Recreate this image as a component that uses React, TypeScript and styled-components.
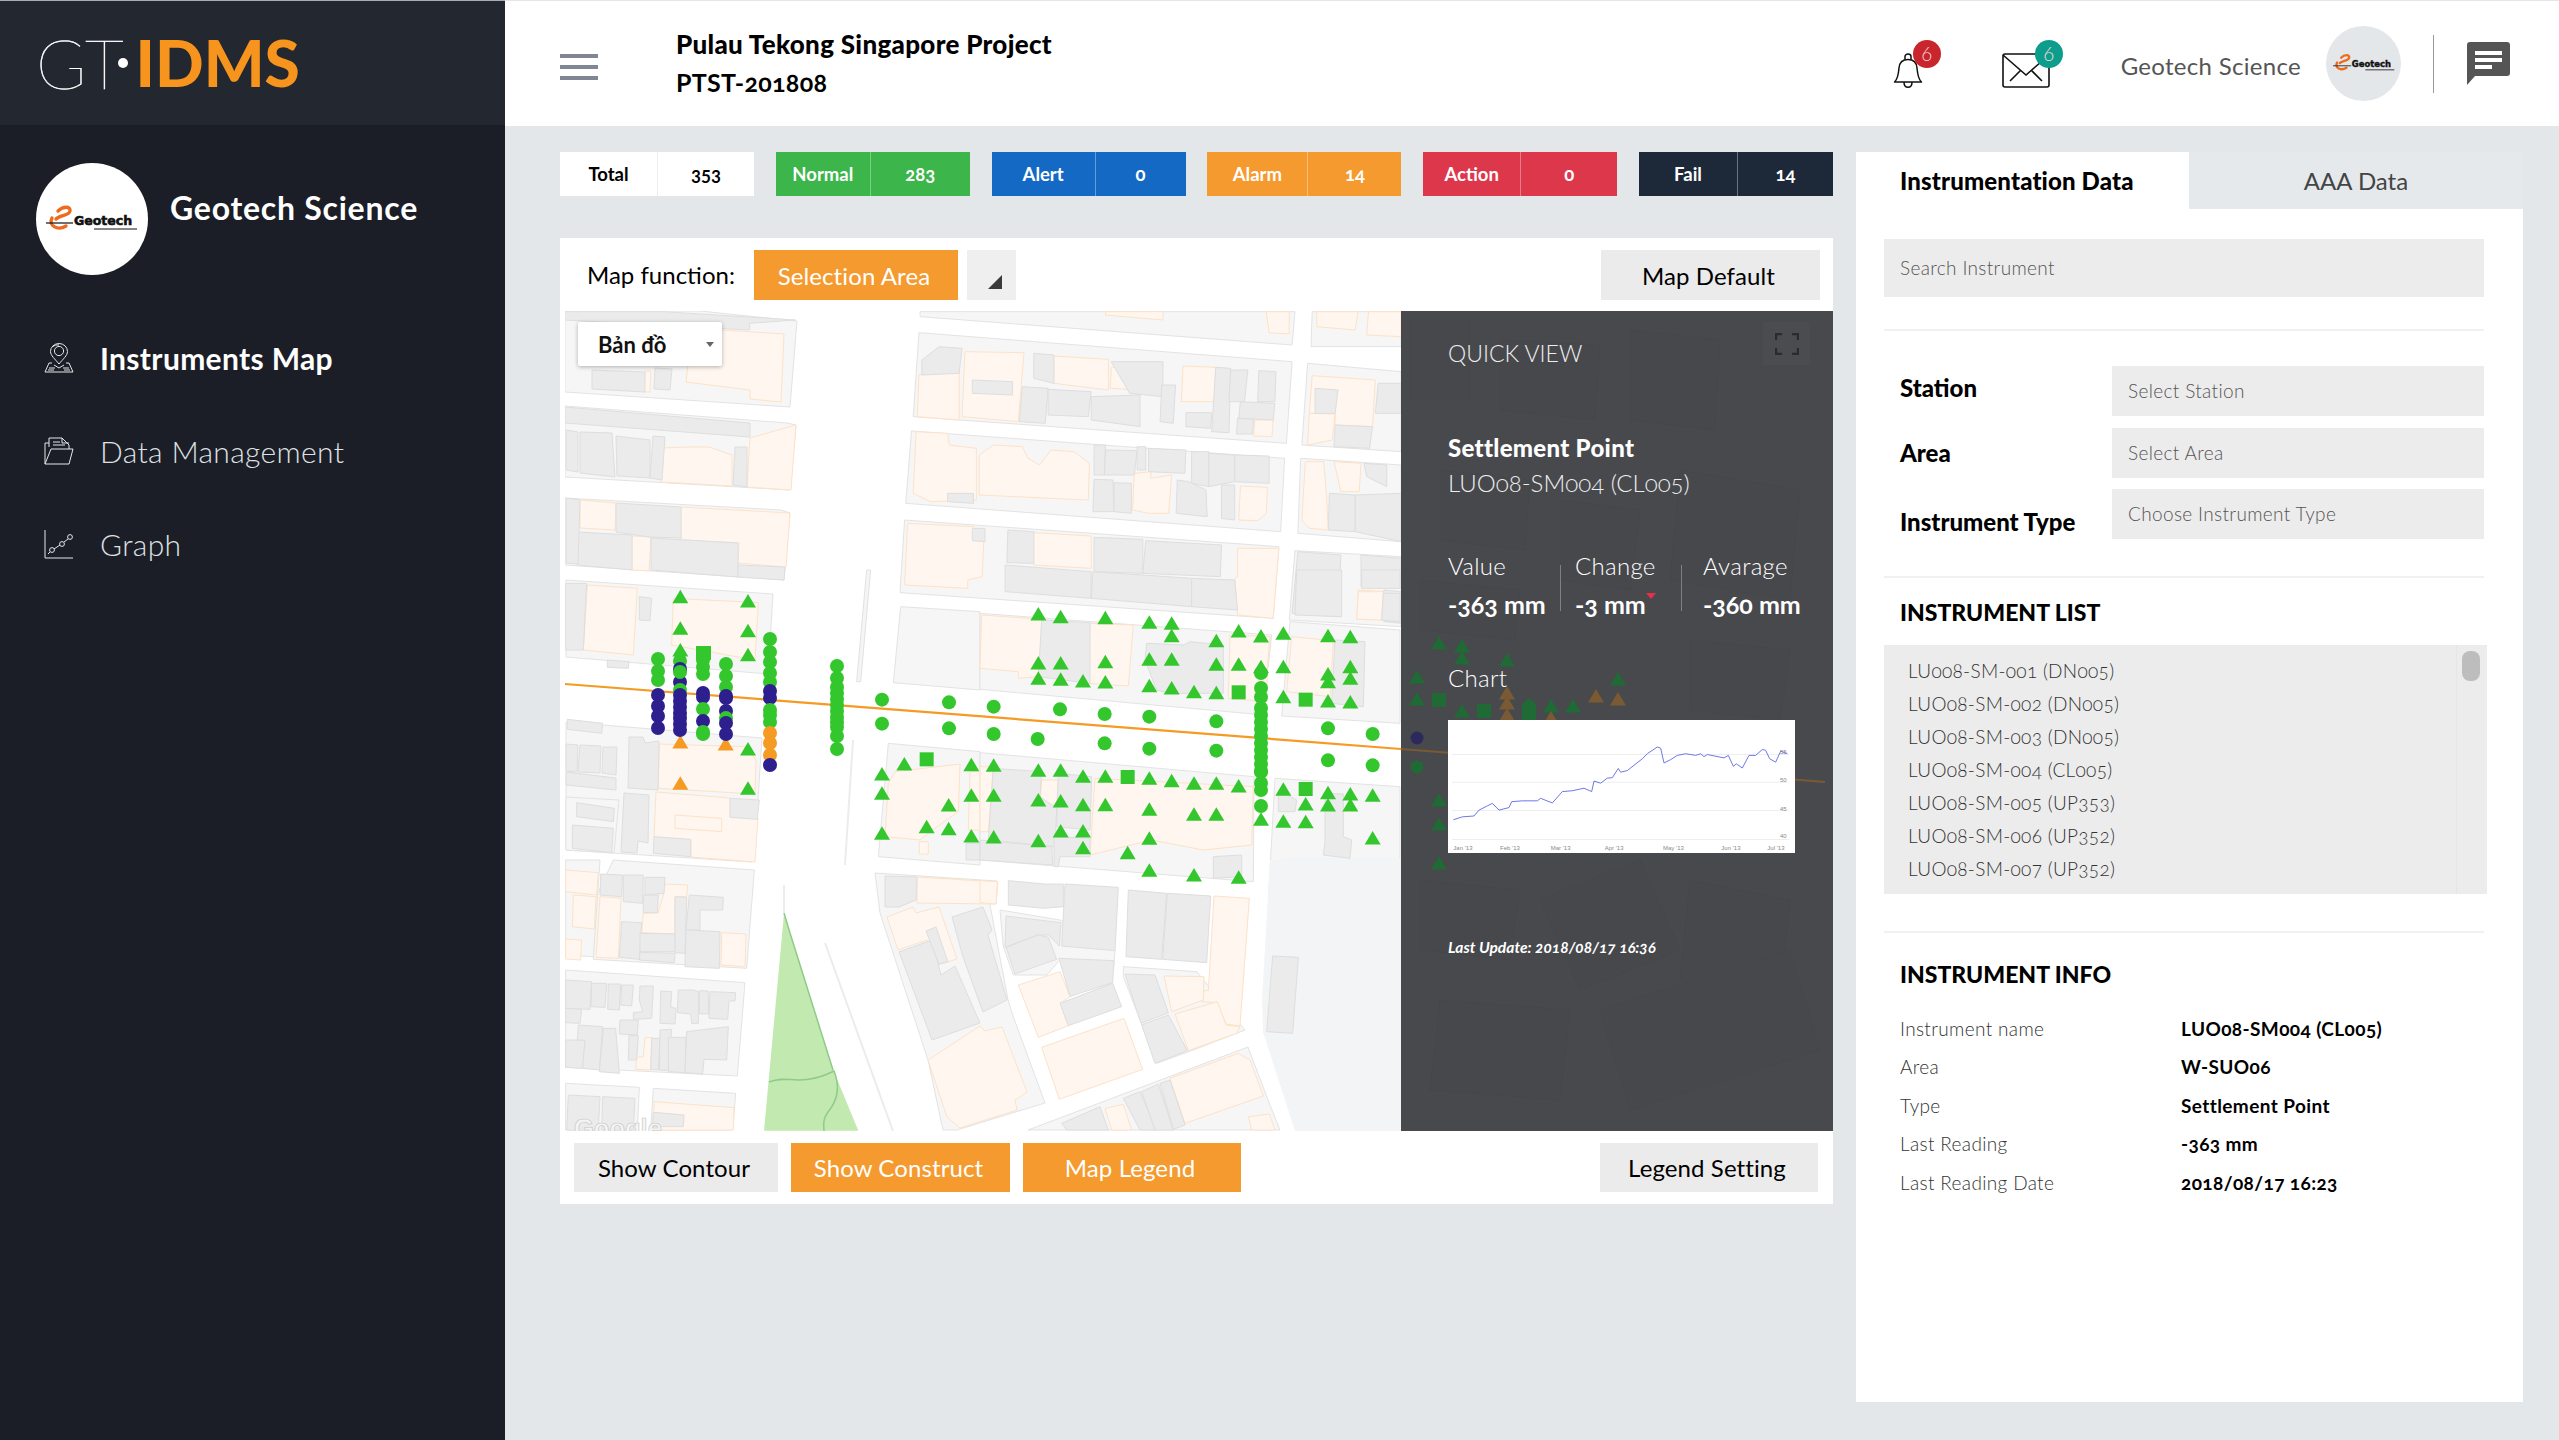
import React from 'react';
import styled, { createGlobalStyle } from 'styled-components';

const FONT = `Lato, "Noto Sans", sans-serif`;

const Global = createGlobalStyle`
  html, body { margin: 0; padding: 0; background: #e4e7ea; }
  body { font-family: ${FONT}; font-variant-numeric: oldstyle-nums; -webkit-font-smoothing: antialiased; }
  * { box-sizing: border-box; }
`;

/* ---------- map data: polygons are noted in crop coordinates and mapped to page pixels ---------- */
type Z = { ox: number; oy: number; sx: number; sy: number };
const Z2: Z = { ox: 520, oy: 130, sx: 1.742, sy: 3 };
const Z7: Z = { ox: 560, oy: 570, sx: 3, sy: 3 };
const Z8: Z = { ox: 980, oy: 570, sx: 3, sy: 3 };
const Z11: Z = { ox: 560, oy: 860, sx: 3, sy: 3 };
const Z12: Z = { ox: 980, oy: 860, sx: 3, sy: 3 };
const Z4: Z = { ox: 1400, oy: 300, sx: 3, sy: 2.376 };
const P: Z = { ox: 0, oy: 0, sx: 1, sy: 1 };

const pts = (s: string) => s.trim().split(/\s+/).map((p) => p.split(',').map(Number));
const conv = (z: Z, s: string) => pts(s).map(([x, y]) => `${z.ox + x / z.sx},${z.oy + y / z.sy}`).join(' ');

const BLOCKS: [Z, string][] = [
  [P, '565,311 700,311 797,321 790,407 565,392'],
  [P, '565,406 787,423 796,425 790,490 565,477'],
  [P, '565,498 781,510 790,513 784,580 565,565'],
  [P, '566,580 773,594 768,674 566,657'],
  [P, '566,722 762,738 758,800 752,862 566,850'],
  [P, '566,797 619,800 614,853 566,850'],
  [Z2, '697,545 1350,545 1345,645 697,560'],
  [Z2, '695,608 1345,695 1335,940 685,860'],
  [Z2, '682,903 1332,985 1325,1205 672,1120'],
  [Z2, '670,1170 1322,1250 1312,1465 662,1388'],
  [Z2, '1380,545 1535,545 1535,650 1378,650'],
  [Z2, '1372,700 1535,725 1535,965 1362,945'],
  [Z2, '1360,985 1535,1005 1535,1235 1355,1210'],
  [Z2, '1350,1262 1535,1280 1535,1490 1340,1470'],
  [Z7, '1022,110 1260,125 1260,360 1000,338'],
  [Z7, '985,520 1260,545 1260,885 955,860'],
  [Z8, '0,130 875,195 865,290 820,432 0,358'],
  [Z8, '930,155 1260,180 1260,460 905,438'],
  [Z8, '0,548 822,620 820,935 0,870'],
  [Z8, '885,625 1260,650 1260,990 865,990'],
  [Z11, '160,0 583,30 560,325 100,298 108,110'],
  [Z11, '17,0 120,0 100,290 17,285'],
  [Z11, '17,330 555,368 532,648 17,622'],
  [Z11, '17,670 238,682 232,810 17,810'],
  [Z11, '280,685 527,700 518,810 272,810'],
  [P, '875,873 997,881 990,905 1008,1000 1013,1016 1045,1103 957,1130 943,1130 928,1060 880,913'],
  [Z12, '60,150 240,180 405,272 400,330 240,300 200,345 100,345 70,260'],
  [Z12, '430,320 650,335 795,510 640,570 530,610 430,350'],
  [P, '1028,1130 1248,1047 1268,1100 1280,1130'],
];
const PALE: string[] = ['1270,860 1401,860 1401,1131 1295,1131 1263,1032 1262,1000', '1282,858 1401,858 1401,900 1282,900'];

const ORANGE: [Z, string][] = [
  [P, '721,330 784,334 781,402 750,399 750,390 686,382 690,345'],
  [P, '661,448 689,447 709,447 732,455 732,486 661,482'],
  [P, '750,438 796,425 791,490 747,487'],
  [P, '580,500 616,503 615,530 580,528'],
  [P, '681,507 790,513 786,567 738,563 739,543 681,540'],
  [P, '632,536 651,537 649,571 632,570'],
  [P, '645,371 651,371 650,392 644,392'],
  [Z7, '82,45 232,55 220,255 70,240'],
  [Z7, '340,85 595,98 585,270 335,225'],
  [Z7, '298,522 560,530 588,570 585,672 295,655'],
  [P, '656,792 730,798 730,817 758,818 755,862 691,857 691,840 654,837'],
  [Z7, '345,735 485,745 485,785 345,775'],
  [Z2, '1020,545 1120,545 1120,570 1020,555'],
  [Z2, '1300,545 1340,545 1340,612 1305,608'],
  [Z2, '695,735 765,708 765,870 692,860'],
  [Z2, '775,665 878,668 868,875 770,860'],
  [Z2, '930,678 1025,688 1025,780 930,760'],
  [Z2, '1030,712 1062,712 1060,778 1028,775'],
  [Z2, '1155,708 1212,712 1210,815 1152,815'],
  [Z2, '1280,870 1312,870 1310,920 1278,918'],
  [Z2, '690,905 745,910 748,945 795,955 795,1110 715,1115 685,1090'],
  [Z2, '800,975 825,945 875,950 885,985 905,1005 925,960 965,965 992,1000 990,1110 800,1095'],
  [Z2, '1070,1030 1100,1025 1098,1045 1135,1035 1130,1150 1095,1150 1067,1140'],
  [Z2, '1255,1068 1302,1072 1300,1150 1285,1172 1252,1170'],
  [Z2, '675,1180 790,1190 808,1230 805,1340 780,1350 780,1375 670,1365'],
  [Z2, '895,1208 995,1218 995,1315 895,1305'],
  [Z2, '1250,1255 1322,1255 1312,1465 1250,1455 1245,1345 1250,1340'],
  [Z2, '1388,545 1460,545 1455,600 1388,590'],
  [Z2, '1478,545 1535,545 1535,620 1475,615'],
  [Z2, '1380,737 1490,750 1485,890 1420,885 1420,850 1375,850'],
  [Z2, '1375,850 1420,852 1415,930 1372,945'],
  [Z2, '1368,995 1400,995 1405,1100 1408,1200 1375,1195 1362,1170'],
  [Z2, '1418,995 1465,1000 1462,1085 1430,1085'],
  [Z2, '1460,1380 1505,1385 1505,1470 1458,1465'],
  [Z7, '985,640 1005,605 1200,582 1195,725 1110,785 1080,810 975,800'],
  [Z7, '1078,815 1105,815 1105,852 1078,852'],
  [Z7, '1230,605 1260,605 1260,780 1225,780'],
  [Z8, '5,135 185,148 180,320 115,325 115,305 0,295'],
  [Z8, '330,160 460,165 445,348 325,340'],
  [Z8, '750,195 870,200 862,290 860,395 745,385'],
  [Z8, '935,200 1060,212 1050,380 920,365'],
  [Z8, '0,590 40,590 25,785 0,785'],
  [Z8, '185,630 235,630 230,710 180,700'],
  [Z8, '345,625 820,650 815,825 670,840 515,810 330,855 335,780'],
  [Z8, '1135,65 1210,65 1205,150 1130,148'],
  [Z11, '17,30 115,38 110,105 17,95'],
  [Z11, '40,105 108,110 103,207 37,200'],
  [Z11, '17,237 65,240 62,300 17,297'],
  [Z11, '120,110 183,115 175,295 108,292'],
  [Z11, '315,72 383,75 380,110 345,110 345,222 245,218 250,160 295,158 310,105'],
  [Z11, '485,218 558,222 555,320 483,315'],
  [Z11, '255,533 277,533 272,630 228,628 228,592 250,590'],
  [Z11, '283,725 522,743 520,810 280,810'],
  [P, '917,877 998,882 996,904 917,903'],
  [P, '887,917 913,907 916,913 939,907 957,959 937,965 927,940 898,950'],
  [P, '928,1060 980,1026 985,1031 1002,1027 1027,1092 1015,1100 1017,1110 960,1128 947,1117 943,1105'],
  [Z12, '702,108 808,115 780,498 738,492 712,428 668,425 672,392 685,392'],
  [Z12, '552,348 672,350 670,420 575,455'],
  [Z12, '585,462 712,425 738,495 780,500 770,520 625,572'],
  [Z12, '115,375 240,335 270,410 240,430 265,497 175,532'],
  [Z12, '185,562 432,475 488,628 238,718'],
  [Z12, '570,655 775,580 810,600 850,708 615,790'],
  [Z12, '375,745 430,733 455,810 395,810'],
  [Z12, '805,770 868,762 885,810 815,810'],
  [Z12, '0,62 52,65 48,132 0,128'],
];

const GREY: [Z, string][] = [
  [P, '592,370 645,372 645,392 592,389'],
  [P, '655,368 672,369 670,390 654,389'],
  [P, '565,407 750,423 750,437 565,423'],
  [P, '580,432 612,433 615,477 580,473'],
  [P, '616,436 650,440 650,478 617,476'],
  [P, '566,430 578,432 578,472 566,470'],
  [P, '653,436 665,437 662,480 650,478'],
  [P, '735,447 747,447 747,487 733,485'],
  [P, '616,503 681,507 681,538 649,537 616,532'],
  [P, '577,532 632,535 632,570 577,565'],
  [P, '651,538 738,543 738,577 651,570'],
  [P, '738,565 785,567 784,580 738,577'],
  [P, '566,498 580,500 578,564 566,563'],
  [Z7, '17,40 80,40 70,240 17,240'],
  [Z7, '238,80 275,85 270,152 238,150'],
  [Z7, '142,270 207,275 205,295 142,292'],
  [Z7, '22,448 128,460 125,490 22,478'],
  [P, '566,744 578,745 577,772 566,771'],
  [P, '580,745 601,746 600,773 578,772'],
  [P, '603,747 617,747 616,775 602,773'],
  [P, '566,772 616,778 616,790 566,785'],
  [P, '629,737 643,737 645,743 659,741 658,790 628,788'],
  [P, '624,793 649,795 648,843 638,841 637,853 621,852'],
  [Z7, '50,698 163,715 160,755 50,740'],
  [Z7, '37,765 160,775 155,848 37,835'],
  [Z7, '510,685 598,690 592,748 510,742'],
  [Z7, '282,800 392,808 392,860 280,850'],
  [Z7, '1218,820 1260,820 1260,870 1218,870'],
  [Z2, '700,690 730,650 770,655 765,730 700,735'],
  [Z2, '788,750 858,755 858,795 788,790'],
  [Z2, '895,670 930,675 930,760 895,745'],
  [Z2, '1030,695 1120,695 1120,800 1062,790'],
  [Z2, '875,770 920,775 915,880 870,875'],
  [Z2, '920,778 995,785 990,860 920,855'],
  [Z2, '995,800 1080,795 1080,890 995,870'],
  [Z2, '1118,765 1142,765 1138,880 1115,875'],
  [Z2, '1212,712 1238,715 1235,908 1205,905'],
  [Z2, '1238,720 1268,720 1262,815 1235,815'],
  [Z2, '1287,722 1317,725 1315,815 1285,815'],
  [Z2, '1255,815 1315,820 1312,870 1252,865'],
  [Z2, '1160,848 1205,848 1203,895 1160,890'],
  [Z2, '1250,865 1278,868 1276,912 1248,912'],
  [Z2, '745,1090 790,1090 790,1120 745,1115'],
  [Z2, '1000,945 1020,945 1018,1035 1000,1035'],
  [Z2, '1020,960 1075,962 1070,1035 1018,1035'],
  [Z2, '1075,950 1090,950 1090,1020 1075,1020'],
  [Z2, '1095,955 1160,960 1158,1030 1095,1025'],
  [Z2, '1170,965 1200,965 1200,1070 1170,1060'],
  [Z2, '1200,970 1245,975 1245,1055 1200,1070'],
  [Z2, '1245,975 1305,978 1305,1060 1245,1055'],
  [Z2, '1000,1048 1033,1050 1035,1145 998,1145'],
  [Z2, '1035,1058 1065,1060 1065,1150 1035,1145'],
  [Z2, '1145,1050 1165,1055 1195,1080 1197,1160 1143,1150'],
  [Z2, '1222,1065 1245,1065 1245,1170 1222,1165'],
  [Z2, '788,1195 810,1195 810,1235 788,1232'],
  [Z2, '850,1200 895,1205 895,1300 848,1298'],
  [Z2, '845,1305 995,1325 995,1405 845,1385'],
  [Z2, '1000,1222 1085,1228 1085,1330 1000,1325'],
  [Z2, '1090,1232 1222,1245 1220,1340 1085,1330'],
  [Z2, '998,1325 1170,1345 1170,1430 995,1405'],
  [Z2, '1170,1345 1245,1350 1250,1440 1170,1430'],
  [Z2, '1385,775 1425,780 1420,850 1385,850'],
  [Z2, '1495,760 1535,760 1535,850 1490,850'],
  [Z2, '1420,885 1485,890 1480,955 1418,950'],
  [Z2, '1470,1000 1510,1005 1510,1070 1475,1040'],
  [Z2, '1410,1090 1455,1095 1455,1205 1408,1200'],
  [Z2, '1455,1095 1535,1090 1535,1235 1455,1205'],
  [Z2, '1355,1265 1430,1275 1425,1460 1345,1450'],
  [Z2, '1465,1275 1535,1285 1535,1375 1465,1370'],
  [Z2, '1505,1380 1535,1385 1535,1480 1505,1475'],
  [Z2, '78,545 250,545 480,570 400,580 400,600 78,570'],
  [Z8, '185,150 330,158 330,340 175,320'],
  [Z8, '500,220 610,225 630,215 730,225 730,370 570,370 530,360 495,270'],
  [Z8, '1065,210 1155,215 1150,410 1055,400'],
  [Z8, '40,595 185,605 180,680 230,715 225,830 25,810'],
  [Z8, '235,610 335,620 330,780 230,770'],
  [Z8, '0,810 215,830 218,885 0,870'],
  [Z8, '700,860 785,855 785,920 700,925'],
  [Z8, '222,800 330,805 330,860 240,860 235,890 222,890'],
  [Z8, '895,660 950,690 945,725 895,725'],
  [Z8, '1035,670 1090,672 1090,800 1115,810 1110,865 1030,855 1035,815'],
  [Z8, '950,0 1085,0 1085,140 945,135'],
  [Z8, '1145,0 1260,0 1260,55 1145,55'],
  [Z8, '1210,70 1260,70 1260,155 1205,150'],
  [Z11, '122,42 187,45 185,110 120,105'],
  [Z11, '190,45 250,45 248,130 190,125'],
  [Z11, '255,52 315,52 312,100 255,105'],
  [Z11, '250,105 295,105 292,158 250,158'],
  [Z11, '185,185 245,188 238,298 178,292'],
  [Z11, '240,220 345,222 345,275 240,275'],
  [Z11, '240,277 345,280 343,308 238,300'],
  [Z11, '345,110 380,112 375,280 345,278'],
  [Z11, '388,105 490,112 488,150 420,150 420,210 378,210'],
  [Z11, '378,210 480,215 478,325 375,320'],
  [Z11, '17,360 95,365 90,448 17,445'],
  [Z11, '95,370 140,370 135,442 93,440'],
  [Z11, '145,372 182,372 178,450 143,448'],
  [Z11, '185,375 220,375 215,438 182,435'],
  [Z11, '240,378 280,378 275,475 220,478 220,458 248,455 238,420'],
  [Z11, '302,393 335,395 332,442 348,445 345,492 300,490'],
  [Z11, '355,390 400,390 415,395 415,490 395,490 392,462 352,458'],
  [Z11, '418,392 445,393 445,462 418,462'],
  [Z11, '450,395 527,398 525,423 507,423 503,478 447,475'],
  [Z11, '17,445 65,448 60,490 17,488'],
  [Z11, '17,540 75,540 68,625 17,622'],
  [Z11, '55,495 128,500 118,630 68,625 75,540 52,540'],
  [Z11, '130,505 167,505 178,640 118,635'],
  [Z11, '180,480 235,480 232,525 178,522'],
  [Z11, '207,527 235,527 230,600 205,600'],
  [Z11, '275,535 300,535 295,630 272,628'],
  [Z11, '300,510 335,508 325,632 298,630'],
  [Z11, '325,532 378,532 375,638 325,635'],
  [Z11, '380,515 505,500 500,600 432,598 428,642 375,638'],
  [Z11, '25,705 120,710 115,810 20,810'],
  [Z11, '128,710 225,715 220,810 125,810'],
  [Z11, '280,757 372,765 370,800 278,800'],
  [P, '885,876 917,877 916,900 899,907 885,907'],
  [P, '952,917 983,907 992,930 988,935 1007,1000 983,1012 963,957'],
  [P, '899,952 932,940 941,975 955,966 980,1023 932,1040'],
  [P, '926,931 936,927 948,962 939,964'],
  [Z12, '85,62 195,72 250,72 250,140 190,145 85,135'],
  [Z12, '255,72 415,82 405,272 245,258'],
  [Z12, '78,168 243,188 238,258 205,225 172,225 75,262'],
  [Z12, '78,262 175,225 205,232 230,298 105,342'],
  [Z12, '445,90 560,100 545,298 438,290'],
  [Z12, '562,100 692,108 680,308 548,298'],
  [Z12, '435,342 525,345 565,458 483,490'],
  [Z12, '485,495 565,465 622,572 525,610'],
  [Z12, '237,295 402,302 398,368 298,400 270,410'],
  [Z12, '240,430 398,370 425,440 265,497'],
  [Z12, '430,715 480,695 530,810 480,810'],
  [Z12, '485,695 535,672 580,810 525,810'],
  [Z12, '540,670 570,660 615,795 580,808'],
  [Z12, '245,790 360,740 385,810 260,810'],
  [Z12, '878,288 955,292 938,520 860,515'],
];

const UNDER: string[] = [
  '1410,320 1470,320 1470,400 1410,400', '1500,340 1600,345 1595,420 1500,410', '1630,330 1720,340 1715,430 1630,420',
  '1440,470 1530,480 1525,550 1440,540', '1560,500 1640,510 1630,590 1560,580', '1680,470 1800,490 1790,600 1670,580',
  '1420,580 1520,590 1515,640 1420,630', '1690,640 1790,650 1780,720 1690,710', '1420,880 1520,890 1510,960 1420,950',
  '1540,900 1640,860 1680,950 1580,990', '1690,880 1790,900 1780,1000 1680,980', '1440,1000 1570,1010 1560,1100 1430,1090',
  '1600,1010 1790,950 1820,1050 1630,1110',
];

const G = '#33c72d', N = '#2e1f8f', O = '#f59a23';
type C = [number, number, string];
const col = (x: number, c: string, ys: number[]): C[] => ys.map((y) => [x, y, c]);

const CIRCLES: C[] = [
  ...col(658, G, [659, 671, 680]), ...col(658, N, [695, 706, 716, 728]),
  ...col(680, G, [661]), ...col(680, N, [669, 682]), ...col(680, G, [672, 690]), ...col(680, N, [695, 701, 707, 713, 718, 724, 730]),
  ...col(703, G, [660, 667, 674]), ...col(703, N, [693, 697]), ...col(703, G, [709]), ...col(703, N, [721]), ...col(703, G, [732, 734]),
  ...col(726, G, [664, 676, 687]), ...col(726, N, [696, 698, 711]), ...col(726, G, [718]), ...col(726, N, [723, 734]),
  ...col(770, G, [639, 652, 662, 673, 682]), ...col(770, N, [691, 698]), ...col(770, G, [710, 715, 722]), ...col(770, O, [733, 743, 755]), ...col(770, N, [765]),
  ...col(837, G, [666, 678, 687, 693, 699, 705, 711, 717, 722, 727, 736, 749]),
  ...pts('966,389 966,461 1167,397 1167,475').map(([x, y]): C => [560 + x / 3, 570 + y / 3, G]),
  ...pts('41,410 240,418 374,432 508,440 709,454 41,492 173,507 374,520 508,536 709,542 1044,475 1044,571 1178,492 1178,586').map(([x, y]): C => [980 + x / 3, 570 + y / 3, G]),
  ...col(1261, G, [673, 688, 697, 708, 715, 722, 729, 736, 743, 750, 757, 764, 771, 772, 783, 790, 806]),
];

const TRI_G: [Z, string][] = [
  [Z7, '361,80 564,93 361,175 564,182 361,240 564,254 564,537 564,655 1033,582 1234,584 966,612 966,670 1234,676 1166,705 1100,770 1166,776 1234,798 966,790'],
  [Z8, '175,132 242,140 376,143 508,157 575,160 575,197 709,212 776,183 843,198 910,190 1044,197 1111,200 175,279 242,279 376,275 508,268 575,268 709,283 776,283 843,290 910,290 1044,312 1111,290 175,325 242,328 309,333 376,336 508,347 575,354 642,365 709,368 910,380 1044,335 1111,325 1044,393 1111,396 41,586 175,601 242,601 309,619 376,619 508,625 575,632 642,640 709,640 776,648 41,676 175,690 242,693 309,704 376,704 508,718 642,733 709,733 910,658 1044,668 1111,672 1178,676 977,702 1044,705 1111,705 843,748 910,754 977,755 242,783 309,783 41,801 175,812 1178,804 508,805 309,833 443,848 508,901 642,915 776,922'],
];
const TRI_O = '361,516 497,522 361,640';
const SQUARES: [Z, string][] = [[Z7, '1100,568'], [Z8, '776,367 977,389 443,621 977,657']];

const tri = (x: number, y: number) => `${x},${y - 7} ${x + 8},${y + 6.5} ${x - 8},${y + 6.5}`;
const toPage = (z: Z, s: string) => pts(s).map(([x, y]) => [z.ox + x / z.sx, z.oy + y / z.sy]);

const CHART = conv(Z4, '163,1235 190,1228 225,1226 240,1212 265,1202 280,1196 300,1212 330,1206 338,1192 370,1190 415,1190 425,1184 460,1195 490,1168 520,1166 555,1160 578,1168 585,1143 605,1148 625,1136 640,1135 658,1113 665,1122 685,1118 730,1090 745,1078 775,1062 785,1065 795,1100 815,1092 835,1082 860,1078 890,1082 905,1078 915,1085 925,1080 975,1088 988,1082 1003,1108 1012,1102 1030,1112 1050,1082 1070,1082 1090,1068 1100,1070 1112,1090 1130,1098 1145,1072 1165,1078');

/* ---------- layout ---------- */
const Page = styled.div`
  display: flex;
  width: 2559px;
  height: 1440px;
  overflow: hidden;
  background: #e4e7ea;
  color: #000;
`;
const Sidebar = styled.aside`
  width: 505px;
  flex: none;
  background: #1b1e26;
  color: #fff;
  border-top: 1px solid #a9adb3;
`;
const Brand = styled.div`
  height: 124px;
  background: #23272f;
  display: flex;
  align-items: center;
  padding-left: 36px;
  line-height: 1;
`;
const BrandThin = styled.span`
  font-size: 68px;
  font-weight: 100;
  letter-spacing: -1px;
  -webkit-text-stroke: 0.5px #fff;
`;
const BrandDot = styled.i`
  width: 10px;
  height: 10px;
  border-radius: 50%;
  background: #fff;
  margin: 0 8px 0 -5px;
`;
const BrandBold = styled.span`
  font-size: 64px;
  font-weight: 900;
  color: #f7941e;
`;
const Profile = styled.div`
  display: flex;
  align-items: flex-start;
  padding: 38px 0 0 36px;
  gap: 22px;
`;
const Avatar = styled.div<{ $size: number; $bg: string }>`
  width: ${(p) => p.$size}px;
  height: ${(p) => p.$size}px;
  flex: none;
  border-radius: 50%;
  background: ${(p) => p.$bg};
  display: flex;
  align-items: center;
  justify-content: center;
`;
const ProfileName = styled.div`
  font-size: 32px;
  line-height: 40px;
  font-weight: 700;
  padding-top: 25px;
  letter-spacing: 0.75px;
`;
const Nav = styled.nav`
  margin-top: 36px;
`;
const NavItem = styled.div<{ $active?: boolean }>`
  height: 93px;
  display: flex;
  align-items: center;
  gap: 26px;
  padding-left: 44px;
  font-size: 30px;
  letter-spacing: 0.35px;
  font-weight: ${(p) => (p.$active ? 700 : 300)};
  color: ${(p) => (p.$active ? '#fff' : '#dfe1e4')};
`;
const Main = styled.main`
  flex: 1;
  display: flex;
  flex-direction: column;
  min-width: 0;
`;
const Topbar = styled.header`
  height: 126px;
  flex: none;
  background: #fff;
  border-top: 1px solid #e4e7ea;
  display: flex;
  align-items: center;
  padding: 0 49px 0 55px;
`;
const Burger = styled.div`
  width: 38px;
  display: flex;
  flex-direction: column;
  gap: 7px;
  margin: 7px 78px 0 0;
  span { height: 4px; background: #808694; }
`;
const Titles = styled.div`
  display: flex;
  flex-direction: column;
`;
const ProjectName = styled.div`
  font-size: 26px;
  line-height: 38px;
  font-weight: 900;
  letter-spacing: 0.3px;
`;
const ProjectCode = styled.div`
  font-size: 25px;
  line-height: 39px;
  font-weight: 700;
  letter-spacing: 0.3px;
`;
const TopActions = styled.div`
  margin-left: auto;
  display: flex;
  align-items: center;
`;
const IconHolder = styled.div<{ $gap: number }>`
  position: relative;
  display: flex;
  margin-right: ${(p) => p.$gap}px;
  margin-top: 14px;
`;
const Badge = styled.span<{ $bg: string; $right: number }>`
  position: absolute;
  top: -13px;
  right: ${(p) => p.$right}px;
  width: 28px;
  height: 28px;
  border-radius: 50%;
  background: ${(p) => p.$bg};
  color: #f4d9d9;
  font-size: 19px;
  font-weight: 300;
  line-height: 28px;
  text-align: center;
  font-variant-numeric: lining-nums;
`;
const UserName = styled.div`
  font-size: 24px;
  color: #555;
  font-weight: 400;
  letter-spacing: 0.3px;
  margin-right: 25px;
  margin-top: 4px;
`;
const VLine = styled.div`
  width: 1px;
  height: 58px;
  background: #9a9a9a;
  margin: 0 33px 0 32px;
`;
const Content = styled.div`
  flex: 1;
  display: flex;
  gap: 23px;
  padding: 26px 36px 38px 55px;
  min-height: 0;
`;
const LeftCol = styled.div`
  width: 1273px;
  flex: none;
`;
const StatusRow = styled.div`
  display: flex;
  justify-content: space-between;
  margin-bottom: 42px;
`;
const Status = styled.div<{ $bg: string; $fg: string; $line: string; $label: number }>`
  width: 194px;
  height: 44px;
  display: grid;
  grid-template-columns: ${(p) => p.$label}px 1fr;
  background: ${(p) => p.$bg};
  color: ${(p) => p.$fg};
  font-size: 18.5px;
  font-weight: 700;
  line-height: 44px;
  text-align: center;
  span + span { border-left: 1px solid ${(p) => p.$line}; }
`;
const MapCard = styled.section`
  height: 966px;
  background: #fff;
  display: flex;
  flex-direction: column;
`;
const Bar = styled.div<{ $pl: number; $pr: number; $gap: number }>`
  height: 73px;
  flex: none;
  display: flex;
  align-items: flex-start;
  gap: ${(p) => p.$gap}px;
  padding: 12px ${(p) => p.$pr}px 0 ${(p) => p.$pl}px;
`;
const FnLabel = styled.div`
  font-size: 24px;
  line-height: 50px;
  width: 167px;
  font-weight: 400;
`;
const Btn = styled.button<{ $w: number; $orange?: boolean; $h?: number }>`
  width: ${(p) => p.$w}px;
  height: ${(p) => p.$h ?? 50}px;
  border: 0;
  padding: 0 4px 0 0;
  font-family: ${FONT};
  font-size: 24px;
  font-weight: 400;
  letter-spacing: 0.1px;
  background: ${(p) => (p.$orange ? '#f59a2f' : '#ebebeb')};
  color: ${(p) => (p.$orange ? '#fff' : '#000')};
`;
const CornerBtn = styled.button`
  width: 49px;
  height: 50px;
  border: 0;
  padding: 0 14px 11px 0;
  background: #efefef;
  display: flex;
  align-items: flex-end;
  justify-content: flex-end;
  margin-left: 9px;
`;
const Push = styled.div`
  flex: 1;
`;
const MapArea = styled.div`
  position: relative;
  height: 820px;
  flex: none;
  margin-left: 5px;
`;
const MapSvg = styled.svg`
  display: block;
  width: 1268px;
  height: 820px;
`;
const MapType = styled.div`
  position: absolute;
  left: 13px;
  top: 11px;
  width: 144px;
  height: 44px;
  background: #fff;
  border-radius: 2px;
  box-shadow: 0 1px 4px rgba(0, 0, 0, 0.3);
  display: flex;
  align-items: center;
  justify-content: space-between;
  padding: 0 8px 0 20px;
  font-size: 22px;
  font-weight: 700;
  color: #111;
  i {
    width: 0; height: 0;
    border: 4px solid transparent;
    border-top: 5px solid #666;
    margin-top: 5px;
  }
`;
const QuickView = styled.div`
  position: absolute;
  right: 0;
  top: 0;
  width: 432px;
  height: 820px;
  background: rgba(58, 59, 64, 0.93);
  color: #fff;
  padding: 30px 0 0 47px;
`;
const DimLayer = styled.svg`
  position: absolute;
  left: 0;
  top: 0;
  width: 432px;
  height: 820px;
`;
const QvInner = styled.div`
  position: relative;
  display: flex;
  flex-direction: column;
`;
const QvTitle = styled.div`
  font-size: 23px;
  line-height: 24px;
  font-weight: 300;
  color: #eee;
`;
const QvHead = styled.div`
  margin-top: 69px;
  font-size: 24px;
  line-height: 28px;
  font-weight: 900;
  letter-spacing: 0.3px;
`;
const QvSub = styled.div`
  margin-top: 7px;
  font-size: 24px;
  line-height: 28px;
  font-weight: 300;
  color: #eee;
`;
const Stats = styled.div`
  margin-top: 55px;
  display: flex;
  height: 67px;
`;
const Stat = styled.div<{ $w: number; $pl?: number }>`
  width: ${(p) => p.$w}px;
  padding-left: ${(p) => p.$pl ?? 0}px;
  flex: none;
`;
const StatKey = styled.div`
  font-size: 24px;
  line-height: 28px;
  font-weight: 300;
  margin-bottom: 10px;
  letter-spacing: 0.3px;
`;
const StatVal = styled.div`
  font-size: 25px;
  line-height: 28px;
  font-weight: 700;
  white-space: nowrap;
`;
const Caret = styled.i`
  display: inline-block;
  width: 0;
  height: 0;
  border: 5.5px solid transparent;
  border-top: 6px solid #e6304b;
  border-bottom: 0;
  vertical-align: 15px;
`;
const StatSep = styled.div`
  width: 1px;
  height: 46px;
  margin-top: 13px;
  background: rgba(255, 255, 255, 0.3);
  flex: none;
`;
const ChartTitle = styled(StatKey)`
  margin: 45px 0 28px;
`;
const ChartBox = styled.svg`
  display: block;
  width: 347px;
  height: 133px;
  background: #fff;
`;
const Updated = styled.div`
  margin-top: 84px;
  font-size: 15.6px;
  line-height: 20px;
  font-style: italic;
  font-weight: 700;
`;
const FullBtn = styled.div`
  position: absolute;
  top: 11px;
  right: 23px;
  width: 47px;
  height: 43px;
  background: rgba(255, 255, 255, 0.02);
  display: flex;
  align-items: center;
  justify-content: center;
`;

/* right panel */
const Panel = styled.section`
  width: 667px;
  flex: none;
  height: 1250px;
  background: #fff;
`;
const Tabs = styled.div`
  height: 57px;
  display: flex;
  background: #e6e9ec;
`;
const Tab = styled.div<{ $active?: boolean }>`
  width: ${(p) => (p.$active ? '333px' : 'auto')};
  flex: ${(p) => (p.$active ? 'none' : '1')};
  background: ${(p) => (p.$active ? '#fff' : 'transparent')};
  color: ${(p) => (p.$active ? '#000' : '#444')};
  font-size: 24px;
  font-weight: ${(p) => (p.$active ? 900 : 400)};
  line-height: 57px;
  letter-spacing: ${(p) => (p.$active ? '0.15px' : '0')};
  text-align: ${(p) => (p.$active ? 'left' : 'center')};
  padding-left: ${(p) => (p.$active ? '44px' : '0')};
`;
const PanelBody = styled.div`
  padding: 30px 39px 0 28px;
`;
const Field = styled.div<{ $h: number }>`
  height: ${(p) => p.$h}px;
  line-height: ${(p) => p.$h}px;
  background: #ececec;
  font-size: 19px;
  font-weight: 300;
  color: #555;
  letter-spacing: 0.35px;
  padding-left: 16px;
`;
const Rule = styled.div<{ $top: number }>`
  height: 2px;
  background: #f1f1f1;
  margin-top: ${(p) => p.$top}px;
`;
const Form = styled.div`
  margin-top: 35px;
  display: grid;
  grid-template-columns: 228px 1fr;
  row-gap: 11.5px;
`;
const FormLabel = styled.div<{ $lh: number; $pt?: number }>`
  height: 50px;
  font-size: 24px;
  font-weight: 900;
  line-height: ${(p) => p.$lh}px;
  padding: ${(p) => p.$pt ?? 0}px 0 0 16px;
  white-space: nowrap;
`;
const SectionTitle = styled.h3<{ $top: number; $bottom: number }>`
  margin: ${(p) => p.$top}px 0 ${(p) => p.$bottom}px;
  padding-left: 16px;
  font-size: 23px;
  line-height: 28px;
  font-weight: 900;
`;
const ListBox = styled.div`
  height: 249px;
  margin-right: -3px;
  background: #ececec;
  display: flex;
  justify-content: space-between;
`;
const Rows = styled.div`
  padding: 9px 0 0 24px;
`;
const Row = styled.div`
  height: 33px;
  line-height: 33px;
  font-size: 19px;
  font-weight: 300;
  color: #333;
  letter-spacing: 0.3px;
`;
const ScrollTrack = styled.div`
  width: 31px;
  border-left: 1px solid #e6e6e6;
  padding: 6px 7px 0 5px;
`;
const ScrollThumb = styled.div`
  height: 30px;
  border-radius: 8px;
  background: #bdbdbd;
`;
const InfoGrid = styled.div`
  display: grid;
  grid-template-columns: 281px 1fr;
  padding-left: 16px;
  margin-top: -5px;
`;
const InfoKey = styled.div`
  height: 38.4px;
  line-height: 38.4px;
  font-size: 19px;
  font-weight: 300;
  color: #333;
  letter-spacing: 0.35px;
`;
const InfoVal = styled(InfoKey)`
  font-weight: 700;
  color: #000;
  letter-spacing: 0.4px;
`;

/* ---------- drawings ---------- */
const GeotechLogo = ({ w }: { w: number }) => (
  <svg width={w} viewBox="0 0 92 30" aria-hidden>
    <path d="M12 7 C17 2 25 2 24 7 C23 12 14 11 10 15 M6 14 C2 22 12 27 20 22" fill="none" stroke="#ee6a1c" strokeWidth="3.4" strokeLinecap="round" />
    <path d="M0 19 H27" stroke="#111" strokeWidth="1.2" />
    <text x="28" y="21" fontFamily="'DejaVu Sans', sans-serif" fontWeight="700" fontSize="12.5" fill="#111" stroke="#111" strokeWidth="0.6">Geotech</text>
    <path d="M48 25 H91" stroke="#111" strokeWidth="1.2" />
  </svg>
);

const PinIcon = () => (
  <svg width="30" height="30" viewBox="0 0 30 30" fill="none" stroke="#e4e6e8" strokeWidth="1">
    <path d="M15 21 C11 16 6.5 12.5 6.5 8.5 A8.5 8 0 0 1 23.5 8.5 C23.5 12.5 19 16 15 21 Z" />
    <circle cx="15" cy="8" r="4.6" />
    <path d="M9 3.5 A6.5 6 0 0 1 15 2" />
    <path d="M8 20 H5 L1 29 H29 L25 20 H22 M10 22 L15 25 L20 22" />
    <path d="M5 25 H11 M19 25 H25 M4 27 H10 M20 27 H26" />
  </svg>
);
const FolderIcon = () => (
  <svg width="30" height="30" viewBox="0 0 30 30" fill="none" stroke="#e4e6e8" strokeWidth="1">
    <path d="M1 28 V7 H5 M1 28 H25 L29 13 H26 M1 28 L7 13 H26" />
    <path d="M5 11 V2 H18 L25 9 V13" />
    <path d="M9 6 H16 M9 9 H21" />
    <path d="M18 2 V7 H25" />
  </svg>
);
const GraphIcon = () => (
  <svg width="30" height="30" viewBox="0 0 30 30" fill="none" stroke="#e4e6e8" strokeWidth="1">
    <path d="M1 1 V29 H29" />
    <circle cx="8" cy="21" r="2.4" />
    <circle cx="18" cy="15" r="2.4" />
    <circle cx="26" cy="8" r="2.4" />
    <path d="M4 25 L6 23 M10 20 L16 16 M20 13 L24 10" />
  </svg>
);
const BellIcon = () => (
  <svg width="30" height="36" viewBox="0 0 30 36" fill="none" stroke="#111" strokeWidth="1.5" strokeLinejoin="round">
    <path d="M1.5 29 C5 26 5.5 21 6 15 C6.5 9 10 6.5 15 6.5 C20 6.5 23.5 9 24 15 C24.5 21 25 26 28.5 29 Z" />
    <path d="M12 6.5 V3.5 A3 2.5 0 0 1 18 3.5 V6.5" />
    <path d="M11 29 C11 36 19 36 19 29" />
  </svg>
);
const MailIcon = () => (
  <svg width="48" height="35" viewBox="0 0 48 35" fill="none" stroke="#111" strokeWidth="1.6">
    <rect x="1" y="1" width="46" height="33" rx="2" />
    <path d="M1 2 L24 22 L47 2 M8 28 L19 17 M40 28 L29 17" />
  </svg>
);
const ChatIcon = () => (
  <svg width="43" height="43" viewBox="0 0 43 43" aria-hidden>
    <path d="M3 0 H40 A3 3 0 0 1 43 3 V31 A3 3 0 0 1 40 34 H8 L0 43 V3 A3 3 0 0 1 3 0 Z" fill="#555" />
    <path d="M8 9 H35 V13 H8 Z M8 16 H35 V20 H8 Z M8 23 H25 V27 H8 Z" fill="#fff" />
  </svg>
);
const FullscreenIcon = () => (
  <svg width="24" height="22" viewBox="0 0 24 22" fill="none" stroke="#2a2b30" strokeWidth="2.4">
    <path d="M1 7 V1 H7 M17 1 H23 V7 M23 15 V21 H17 M7 21 H1 V15" />
  </svg>
);

const polyFill = { b: '#f6f6f6', g: '#ebebeb', o: '#fff6ef' };
const polyStroke = { b: '#e3e3e3', g: '#dedede', o: '#fde2c8' };

const BaseMap = () => (
  <>
    <rect x="565" y="311" width="1268" height="820" fill="#fff" />
    {BLOCKS.map(([z, s], i) => <polygon key={`b${i}`} points={conv(z, s)} fill={polyFill.b} stroke={polyStroke.b} />)}
    {PALE.map((s, i) => <polygon key={`p${i}`} points={s} fill="#f3f4f6" />)}
    {ORANGE.map(([z, s], i) => <polygon key={`o${i}`} points={conv(z, s)} fill={polyFill.o} stroke={polyStroke.o} />)}
    {GREY.map(([z, s], i) => <polygon key={`g${i}`} points={conv(z, s)} fill={polyFill.g} stroke={polyStroke.g} />)}
    {UNDER.map((s, i) => <polygon key={`u${i}`} points={s} fill="#f0f0f0" stroke="#cfcfcf" />)}
    <polygon points={conv(Z11, '672,160 690,220 820,630 895,812 612,812 650,400')} fill="#c2eab0" />
    <path d="M784 913 L790 933 L833 1070" fill="none" stroke="#8fcb88" strokeWidth="1.5" />
    <path d="M769 1082 C786 1074 800 1088 834 1071 C840 1086 838 1100 828 1112 C822 1120 824 1126 824 1131" fill="none" stroke="#8fcb88" strokeWidth="1.5" />
    <path d="M825 943 L893 1131 M784 885 L784 913 M853 740 L845 865" fill="none" stroke="#ececec" strokeWidth="2" />
    <polygon points={conv(Z7, '920,0 932,0 902,335 890,335')} fill="#f5f5f5" stroke="#e2e2e2" />
    <text x="574" y="1137" fontFamily="'Liberation Sans', sans-serif" fontSize="25.5" fontWeight="700" fill="#f4f4f4" stroke="#c4c4c4" strokeWidth="0.6">Google</text>
  </>
);

const Markers = () => (
  <>
    <line x1="565" y1="684" x2="1401" y2="749" stroke="#f59a23" strokeWidth="2.2" />
    {TRI_G.flatMap(([z, s], i) => toPage(z, s).map(([x, y], j) => <polygon key={`t${i}-${j}`} points={tri(x, y)} fill={G} />))}
    {toPage(Z7, TRI_O).map(([x, y], j) => <polygon key={`to${j}`} points={tri(x, y)} fill={O} />)}
    {SQUARES.flatMap(([z, s], i) => toPage(z, s).map(([x, y], j) => <rect key={`s${i}-${j}`} x={x - 7} y={y - 7} width="14" height="14" fill={G} />))}
    <rect x="696" y="646" width="15" height="14" fill={G} />
    {CIRCLES.map(([x, y, c], i) => <circle key={`c${i}`} cx={x} cy={y} r="7" fill={c} />)}
  </>
);

const DIM_G = '#1f6a35';
const DIM_O = '#7a5a33';
const DimMarkers = () => (
  <DimLayer viewBox="1401 311 432 820">
    <line x1="1401" y1="749" x2="1825" y2="782" stroke={DIM_O} strokeWidth="2" />
    {pts('1439,643 1462,646 1462,658 1507,660 1417,677 1417,699 1462,711 1551,706 1573,706 1618,679 1439,800 1439,824 1439,863').map(([x, y], i) => <polygon key={i} points={tri(x, y)} fill={DIM_G} />)}
    {pts('1507,693 1507,703 1507,715 1551,718 1596,696 1618,699').map(([x, y], i) => <polygon key={i} points={tri(x, y)} fill={DIM_O} />)}
    {pts('1439,700 1484,711').map(([x, y], i) => <rect key={i} x={x - 7} y={y - 7} width="14" height="14" fill={DIM_G} />)}
    <polygon points="1522,704 1529,698 1536,704 1536,720 1522,720" fill={DIM_G} />
    <circle cx="1417" cy="738" r="6.5" fill="#2c2a5c" />
    <circle cx="1417" cy="767" r="6.5" fill={DIM_G} />
  </DimLayer>
);

const MONTHS: [string, number][] = [["Jan '13", 163], ["Feb '13", 303], ["Mar '13", 455], ["Apr '13", 617], ["May '13", 792], ["Jun '13", 967], ["Jul '13", 1105]];
const Chart = () => (
  <ChartBox viewBox="1449 720 347 133">
    {[1080, 1146, 1213, 1282].map((y) => <line key={y} x1="1453" x2="1790" y1={300 + y / 2.376} y2={300 + y / 2.376} stroke="#eee" />)}
    {[['55', 1072], ['50', 1138], ['45', 1206], ['40', 1272]].map(([t, y]) => (
      <text key={t} x="1781" y={303 + Number(y) / 2.376} fontSize="6" fontFamily="'Liberation Sans', sans-serif" fill="#888">{t}</text>
    ))}
    {MONTHS.map(([t, x]) => (
      <text key={t} x={1400 + x / 3} y="850" fontSize="6" fontFamily="'Liberation Sans', sans-serif" fill="#888">{t}</text>
    ))}
    <polyline points={CHART} fill="none" stroke="#6f78e6" strokeWidth="1" />
  </ChartBox>
);

const STATUS = [
  { k: 'Total', v: '353', bg: '#fff', fg: '#000', line: '#eeeeee', label: 97 },
  { k: 'Normal', v: '283', bg: '#3cb54a', fg: '#fff', line: 'rgba(255,255,255,.35)', label: 94 },
  { k: 'Alert', v: '0', bg: '#1469c4', fg: '#fff', line: 'rgba(255,255,255,.35)', label: 103 },
  { k: 'Alarm', v: '14', bg: '#f59a2f', fg: '#fff', line: 'rgba(255,255,255,.35)', label: 100 },
  { k: 'Action', v: '0', bg: '#dd374c', fg: '#fff', line: 'rgba(255,255,255,.35)', label: 97 },
  { k: 'Fail', v: '14', bg: '#1d2939', fg: '#fff', line: 'rgba(255,255,255,.35)', label: 98 },
];
const LIST = ['LU008-SM-001 (DN005)', 'LUO08-SM-002 (DN005)', 'LUO08-SM-003 (DN005)', 'LUO08-SM-004 (CL005)', 'LUO08-SM-005 (UP353)', 'LUO08-SM-006 (UP352)', 'LUO08-SM-007 (UP352)'];
const INFO: [string, string][] = [['Instrument name', 'LUO08-SM004 (CL005)'], ['Area', 'W-SUO06'], ['Type', 'Settlement Point'], ['Last Reading', '-363 mm'], ['Last Reading Date', '2018/08/17 16:23']];

export default function App() {
  return (
    <Page>
      <Global />
      <Sidebar>
        <Brand>
          <BrandThin>GT</BrandThin>
          <BrandDot />
          <BrandBold>IDMS</BrandBold>
        </Brand>
        <Profile>
          <Avatar $size={112} $bg="#fff"><GeotechLogo w={92} /></Avatar>
          <ProfileName>Geotech Science</ProfileName>
        </Profile>
        <Nav>
          <NavItem $active><PinIcon />Instruments Map</NavItem>
          <NavItem><FolderIcon />Data Management</NavItem>
          <NavItem><GraphIcon />Graph</NavItem>
        </Nav>
      </Sidebar>
      <Main>
        <Topbar>
          <Burger><span /><span /><span /></Burger>
          <Titles>
            <ProjectName>Pulau Tekong Singapore Project</ProjectName>
            <ProjectCode>PTST-201808</ProjectCode>
          </Titles>
          <TopActions>
            <IconHolder $gap={79}><BellIcon /><Badge $bg="#c8252c" $right={-18}>6</Badge></IconHolder>
            <IconHolder $gap={71}><MailIcon /><Badge $bg="#0c9d8c" $right={-13}>6</Badge></IconHolder>
            <UserName>Geotech Science</UserName>
            <Avatar $size={75} $bg="#e4e7ea"><GeotechLogo w={62} /></Avatar>
            <VLine />
            <ChatIcon />
          </TopActions>
        </Topbar>
        <Content>
          <LeftCol>
            <StatusRow>
              {STATUS.map((s) => (
                <Status key={s.k} $bg={s.bg} $fg={s.fg} $line={s.line} $label={s.label}>
                  <span>{s.k}</span><span>{s.v}</span>
                </Status>
              ))}
            </StatusRow>
            <MapCard>
              <Bar $pl={27} $pr={13} $gap={0}>
                <FnLabel>Map function:</FnLabel>
                <Btn $w={204} $orange>Selection Area</Btn>
                <CornerBtn aria-label="corner">
                  <svg width="14" height="14" viewBox="0 0 14 14"><path d="M14 0 V14 H0 Z" fill="#3a3a3a" /></svg>
                </CornerBtn>
                <Push />
                <Btn $w={219}>Map Default</Btn>
              </Bar>
              <MapArea>
                <MapSvg viewBox="565 311 1268 820" preserveAspectRatio="none">
                  <BaseMap />
                  <Markers />
                </MapSvg>
                <MapType>Bản đồ<i /></MapType>
                <QuickView>
                  <DimMarkers />
                  <FullBtn><FullscreenIcon /></FullBtn>
                  <QvInner>
                    <QvTitle>QUICK VIEW</QvTitle>
                    <QvHead>Settlement Point</QvHead>
                    <QvSub>LUO08-SM004 (CL005)</QvSub>
                    <Stats>
                      <Stat $w={112}><StatKey>Value</StatKey><StatVal>-363 mm</StatVal></Stat>
                      <StatSep />
                      <Stat $w={120} $pl={14}><StatKey>Change</StatKey><StatVal>-3 mm<Caret /></StatVal></Stat>
                      <StatSep />
                      <Stat $w={150} $pl={21}><StatKey>Avarage</StatKey><StatVal>-360 mm</StatVal></Stat>
                    </Stats>
                    <ChartTitle>Chart</ChartTitle>
                    <Chart />
                    <Updated>Last Update: 2018/08/17 16:36</Updated>
                  </QvInner>
                </QuickView>
              </MapArea>
              <Bar $pl={14} $pr={15} $gap={13}>
                <Btn $w={204} $h={49}>Show Contour</Btn>
                <Btn $w={219} $h={49} $orange>Show Construct</Btn>
                <Btn $w={218} $h={49} $orange>Map Legend</Btn>
                <Push />
                <Btn $w={218} $h={49}>Legend Setting</Btn>
              </Bar>
            </MapCard>
          </LeftCol>
          <Panel>
            <Tabs>
              <Tab $active>Instrumentation Data</Tab>
              <Tab>AAA Data</Tab>
            </Tabs>
            <PanelBody>
              <Field $h={58}>Search Instrument</Field>
              <Rule $top={32} />
              <Form>
                <FormLabel $lh={44}>Station</FormLabel>
                <Field $h={50}>Select Station</Field>
                <FormLabel $lh={50}>Area</FormLabel>
                <Field $h={50}>Select Area</Field>
                <FormLabel $lh={50} $pt={8}>Instrument Type</FormLabel>
                <Field $h={50}>Choose Instrument Type</Field>
              </Form>
              <Rule $top={37} />
              <SectionTitle $top={20} $bottom={19}>INSTRUMENT LIST</SectionTitle>
              <ListBox>
                <Rows>{LIST.map((r) => <Row key={r}>{r}</Row>)}</Rows>
                <ScrollTrack><ScrollThumb /></ScrollTrack>
              </ListBox>
              <Rule $top={37} />
              <SectionTitle $top={27} $bottom={27}>INSTRUMENT INFO</SectionTitle>
              <InfoGrid>
                {INFO.map(([k, v]) => (
                  <React.Fragment key={k}><InfoKey>{k}</InfoKey><InfoVal>{v}</InfoVal></React.Fragment>
                ))}
              </InfoGrid>
            </PanelBody>
          </Panel>
        </Content>
      </Main>
    </Page>
  );
}
